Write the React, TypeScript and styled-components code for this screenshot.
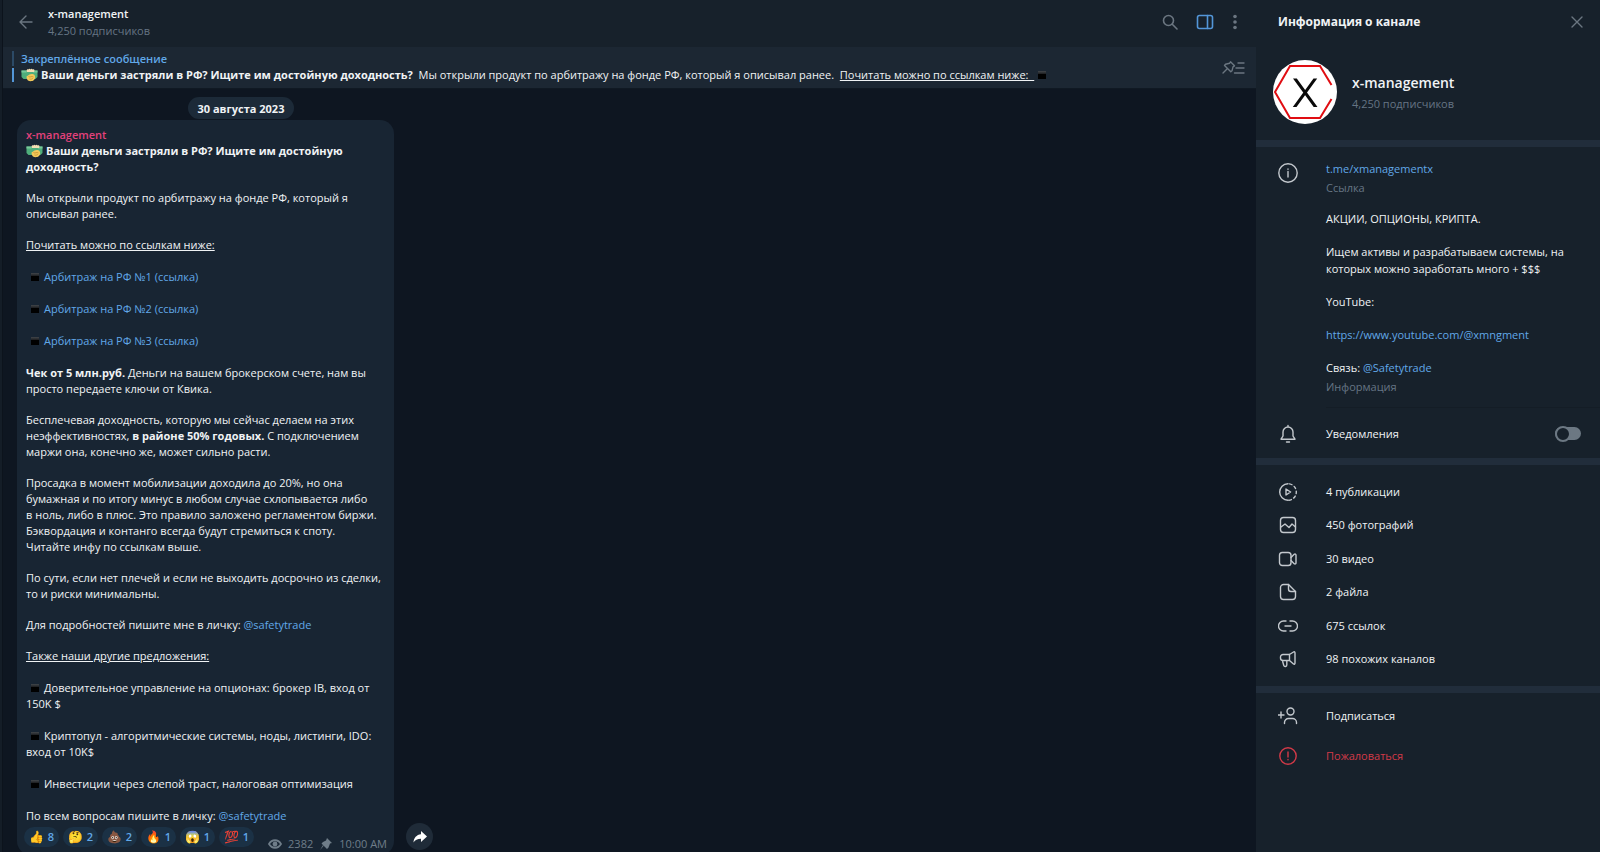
import React from 'react';
import styled, { createGlobalStyle, css } from 'styled-components';

const c = {
  bg: '#0e1621',
  bar: '#17212b',
  pinned: '#1c2733',
  bubble: '#182533',
  divider: '#212d3b',
  text: '#f0f3f5',
  muted: '#667584',
  link: '#61a8e8',
  rose: '#e2417b',
  red: '#d33a48',
  icon: '#c3c8cd',
};

const GlobalStyle = createGlobalStyle`
  * { box-sizing: border-box; }
  body {
    margin: 0;
    background: ${c.bg};
    color: ${c.text};
    font: 11px/16px "Open Sans", "Noto Sans", sans-serif;
  }
  h1, h2, p, ul { margin: 0; padding: 0; font-size: inherit; font-weight: inherit; }
  ul { list-style: none; }
  b { font-weight: 700; }
  button {
    margin: 0; padding: 0; border: 0; background: none;
    color: inherit; font: inherit; cursor: pointer;
  }
`;

const Shell = styled.div`
  display: flex;
  height: 100vh;
  overflow: hidden;
`;

const Rail = styled.div`
  flex: none;
  width: 3px;
  background: #141d27;
  border-right: 1px solid #0c131c;
`;

const Chat = styled.main`
  flex: 1;
  min-width: 0;
  display: flex;
  flex-direction: column;
`;

const ChatHeader = styled.header`
  flex: none;
  display: flex;
  align-items: center;
  height: 47px;
  padding: 0 18px 3px 16px;
  background: ${c.bar};
`;

const IconButton = styled.button<{ $active?: boolean }>`
  flex: none;
  display: grid;
  place-items: center;
  color: ${p => (p.$active ? '#5396d8' : '#6b7681')};
`;

const ChatTitle = styled.div`
  flex: 1;
  padding-left: 15px;
`;

const Name = styled.h1`
  line-height: 17px;
  font-weight: 600;
`;

const Muted = styled.p`
  line-height: 17px;
  color: ${c.muted};
`;

const HeaderActions = styled.div`
  display: flex;
  align-items: center;
  gap: 18px;
`;

const PinnedBar = styled.section`
  flex: none;
  display: flex;
  align-items: center;
  height: 42px;
  padding: 0 10px 0 9px;
  background: ${c.pinned};
  border-bottom: 1px solid #101923;
`;

const PinMarks = styled.div`
  align-self: stretch;
  display: grid;
  gap: 2px;
  width: 2px;
  margin: 4px 7px 6px 0;
`;

const PinMark = styled.span<{ $on?: boolean }>`
  background: ${p => (p.$on ? '#5396d8' : '#2c4a66')};
`;

const PinnedText = styled.div`
  flex: 1;
  min-width: 0;
  padding-bottom: 2px;
  white-space: pre;
  overflow: hidden;
`;

const PinnedTitle = styled.p`
  color: ${c.link};
  font-weight: 600;
`;

const Feed = styled.div`
  flex: 1;
  min-height: 0;
  overflow: hidden;
  padding: 8px 14px 0;
`;

const FeedColumn = styled.div`
  max-width: 448px;
`;

const DateChip = styled.div`
  width: max-content;
  margin: 0 auto 1px;
  padding: 1px 10px 0;
  border-radius: 11px;
  background: #1c2a38;
  font-weight: 700;
  line-height: 21px;
`;

const MessageRow = styled.div`
  display: flex;
  align-items: flex-end;
  gap: 12px;
`;

const Bubble = styled.article`
  width: 377px;
  padding: 7px 7px 0 9px;
  border-radius: 14px;
  background: ${c.bubble};
`;

const Author = styled.h2`
  color: ${c.rose};
  font-weight: 600;
`;

const Group = styled.div<{ $tight?: boolean }>`
  display: grid;
  gap: ${p => (p.$tight ? 15 : 16)}px;
  & + & { margin-top: 16px; }
`;

const Underlined = styled.span`
  text-decoration: underline;
`;

const Link = styled.a`
  color: ${c.link};
  text-decoration: none;
`;

const Marker = styled.span<{ $compact?: boolean }>`
  display: inline-block;
  width: 8px;
  height: 8px;
  margin: 0 5px;
  background: linear-gradient(#41464b, #1b1c1e 38%, #000 39%);
  ${p => p.$compact && css`margin: 0 4px;`}
`;

const InlineEmoji = styled.svg`
  width: 17px;
  height: 14px;
  margin-right: 3px;
  vertical-align: -3px;
`;

const BubbleFooter = styled.footer`
  display: flex;
  justify-content: space-between;
  margin: 3px 0 0 -2px;
  height: 28px;
`;

const Reactions = styled.div`
  display: flex;
  gap: 4px;
`;

const Reaction = styled.button`
  display: flex;
  align-items: center;
  justify-content: center;
  gap: 4px;
  width: 35px;
  height: 20px;
  border-radius: 10px;
  background: #1b3145;
  color: ${c.link};
  font-weight: 600;
`;

const Emoji = styled.span`
  font-size: 12px;
`;

const Meta = styled.div`
  display: flex;
  align-items: center;
  align-self: flex-end;
  gap: 6px;
  height: 22px;
  color: #6f7d89;
`;

const ShareButton = styled.button`
  display: grid;
  place-items: center;
  width: 27px;
  height: 27px;
  margin-bottom: 5px;
  border-radius: 50%;
  background: #1f2b38;
  color: #fff;
`;

const Panel = styled.aside`
  flex: none;
  width: 344px;
  background: ${c.bar};
`;

const PanelHeader = styled.header`
  display: flex;
  align-items: center;
  justify-content: space-between;
  height: 44px;
  padding: 0 16px 0 22px;
  font-size: 12px;
  font-weight: 700;
`;

const Profile = styled.section`
  display: flex;
  align-items: center;
  gap: 15px;
  height: 96px;
  padding: 0 17px;
`;

const ProfileName = styled.h2`
  margin: 2px 0 3px;
  font-size: 14px;
  line-height: 18px;
  font-weight: 600;
`;

const Section = styled.section`
  border-top: 7px solid ${c.divider};
`;

const InfoRow = styled.div`
  display: grid;
  grid-template-columns: 70px 1fr;
  padding: 13px 17px 0 0;
`;

const IconCell = styled.span`
  display: grid;
  justify-items: center;
  align-items: center;
  width: 64px;
  color: ${c.icon};
`;

const InfoIcon = styled(IconCell)`
  align-self: start;
  height: 26px;
`;

const InfoBody = styled.div`
  line-height: 17px;
  border-bottom: 1px solid #141d26;
  padding-bottom: 12px;
  margin-right: -17px;
`;

const InfoLabel = styled.p`
  margin-top: 2px;
  color: ${c.muted};
`;

const About = styled.div`
  display: grid;
  gap: 16px;
  margin-top: 14px;
`;

const NotifyRow = styled.label`
  display: grid;
  grid-template-columns: 70px 1fr auto;
  align-items: center;
  height: 50px;
  padding: 1px 19px 0 0;
  cursor: pointer;
`;

const Switch = styled.input`
  appearance: none;
  display: flex;
  align-items: center;
  width: 26px;
  height: 13px;
  margin: 0;
  border-radius: 7px;
  background: #6c7883;
  &::before {
    content: '';
    flex: none;
    box-sizing: border-box;
    width: 16px;
    height: 16px;
    border: 2px solid #6c7883;
    border-radius: 50%;
    background: ${c.bar};
  }
  &:checked::before { margin-left: 10px; }
`;

const MediaList = styled.ul`
  display: grid;
  grid-auto-rows: 1fr;
  height: 221px;
  padding: 10px 0;
`;

const RowButton = styled.button<{ $danger?: boolean }>`
  display: grid;
  grid-template-columns: 70px 1fr;
  align-items: center;
  width: 100%;
  height: 100%;
  text-align: left;
  ${p => p.$danger && css`
    color: ${c.red};
    ${IconCell} { color: ${c.red}; }
  `}
`;

const ActionList = styled.ul`
  display: grid;
  grid-auto-rows: 40px;
  padding-top: 3px;
`;

type IconProps = { w?: number; h?: number; sw?: number; children: React.ReactNode };
const Icon = ({ w = 20, h = 20, sw = 1.4, children }: IconProps) => (
  <svg width={w} height={h} viewBox={`0 0 ${w} ${h}`} fill="none" stroke="currentColor"
    strokeWidth={sw} strokeLinecap="round" strokeLinejoin="round" aria-hidden="true">
    {children}
  </svg>
);

const MoneyHands = () => (
  <InlineEmoji viewBox="0 0 34 28" aria-label="деньги">
    <path d="M1 5h32v13l-4 4H5l-4-4z" fill="#4fae7b" />
    <path d="M1 5h10v4H1zM24 5h9v4h-9z" fill="#79c99a" />
    <path d="M11 5c1-3 3-3 4-2 1-2 3-2 4 0 1-2 3-2 4 0 2-1 4 0 4 2l-1 3H12z" fill="#f5dfb4" />
    <path d="M11 17l6-4c4-2 8-1 10 1 2 3 2 7-1 10-3 3-9 3-12 1-2-2-3-5-3-8z" fill="#f3c95a" />
    <path d="M15 17c4 3 6-2 10 1M17 22c3 1 5 0 7-2" stroke="#c08a2a" strokeWidth="1.400" fill="none" />
  </InlineEmoji>
);

const media = [
  { label: '4 публикации', icon: (
    <Icon>
      <path d="M10 1.700a8.300 8.300 0 0 0 0 16.600" />
      <path d="M10 1.700a8.300 8.300 0 0 1 0 16.600" strokeDasharray="2.6 2.6" strokeDashoffset="-1.6" />
      <path d="M8 7v6l4.600-3z" />
    </Icon>) },
  { label: '450 фотографий', icon: (
    <Icon>
      <rect x="2.500" y="2.500" width="15" height="15" rx="3" />
      <path d="M3 12l4-3 4 3.500 3-3.500 3.500 3" />
    </Icon>) },
  { label: '30 видео', icon: (
    <Icon>
      <rect x="1.500" y="3.500" width="11.500" height="13" rx="2.800" />
      <path d="M13 8.500l3.200-3.200c.8-.6 1.800-.2 1.800.8v7.800c0 1-1 1.400-1.800.8L13 11.500" />
    </Icon>) },
  { label: '2 файла', icon: (
    <Icon>
      <path d="M10.500 2.500h-5a3 3 0 0 0-3 3v9a3 3 0 0 0 3 3h9a3 3 0 0 0 3-3v-5z" />
      <path d="M10.500 2.500v4.500a2.500 2.500 0 0 0 2.500 2.500h4.500" />
    </Icon>) },
  { label: '675 ссылок', icon: (
    <Icon>
      <path d="M8 5H5.500a5 5 0 0 0 0 10H8M12 5h2.500a5 5 0 0 1 0 10H12M7 10h6" />
    </Icon>) },
  { label: '98 похожих каналов', icon: (
    <Icon>
      <path d="M11.500 5.500H5A2.500 2.500 0 0 0 2.500 8v1A2.500 2.500 0 0 0 5 11.500h6.500zM11.500 5.500l4-2.500c.8-.5 1.500 0 1.500 1v10c0 1-.7 1.500-1.500 1l-4-3.500M4.500 12l1.300 4.500c.5 1.500 3 1.200 3-.5V12" />
    </Icon>) },
];

const links = [1, 2, 3];
const reactions: [string, number][] = [['👍', 8], ['🤔', 2], ['💩', 2], ['🔥', 1], ['😱', 1], ['💯', 1]];

export default function App() {
  return (
    <>
      <GlobalStyle />
      <Shell>
        <Rail />
        <Chat>
          <ChatHeader>
            <IconButton aria-label="Назад">
              <Icon w={14} h={14}><path d="M13 7H1M7 1L1 7l6 6" /></Icon>
            </IconButton>
            <ChatTitle>
              <Name>x-management</Name>
              <Muted>4,250 подписчиков</Muted>
            </ChatTitle>
            <HeaderActions>
              <IconButton aria-label="Поиск">
                <Icon w={16} h={16} sw={1.6}><circle cx="6.500" cy="6.500" r="5" /><path d="M10.300 10.300L15 15" /></Icon>
              </IconButton>
              <IconButton $active aria-label="Информация">
                <Icon w={18} h={16} sw={1.6}><rect x="1.500" y="1.500" width="15" height="13" rx="2" /><path d="M11.500 1.500v13" /></Icon>
              </IconButton>
              <IconButton aria-label="Меню">
                <svg width="6" height="16" fill="currentColor"><circle cx="3" cy="2.500" r="1.800" /><circle cx="3" cy="8" r="1.800" /><circle cx="3" cy="13.500" r="1.800" /></svg>
              </IconButton>
            </HeaderActions>
          </ChatHeader>

          <PinnedBar>
            <PinMarks><PinMark /><PinMark $on /></PinMarks>
            <PinnedText>
              <PinnedTitle>Закреплённое сообщение</PinnedTitle>
              <p>
                <MoneyHands /><b>Ваши деньги застряли в РФ? Ищите им достойную доходность? </b>
                {' Мы открыли продукт по арбитражу на фонде РФ, который я описывал ранее.  '}
                <Underlined>{'Почитать можно по ссылкам ниже:  '}</Underlined><Marker $compact />
              </p>
            </PinnedText>
            <IconButton aria-label="Закреплённые сообщения">
              <Icon w={24} h={16}>
                <path d="M8.500 1.800l4 4-1.500 1-1 4-1.200 1L2.500 5.500l1-1.200 4-1zM5.500 8.500L1 13" />
                <path d="M16 3h6M14 8h8M12.500 13h9.500" />
              </Icon>
            </IconButton>
          </PinnedBar>

          <Feed>
            <FeedColumn>
              <DateChip>30 августа 2023</DateChip>
              <MessageRow>
                <Bubble>
                  <Author>x-management</Author>
                  <Group $tight>
                    <p><MoneyHands /><b>Ваши деньги застряли в РФ? Ищите им достойную<br />доходность?</b></p>
                    <p>Мы открыли продукт по арбитражу на фонде РФ, который я<br />описывал ранее.</p>
                    <p><Underlined>Почитать можно по ссылкам ниже:</Underlined></p>
                  </Group>
                  <Group>
                    {links.map(n => (
                      <p key={n}><Marker /><Link href="#">Арбитраж на РФ №{n} (ссылка)</Link></p>
                    ))}
                  </Group>
                  <Group $tight>
                    <p><b>Чек от 5 млн.руб.</b> Деньги на вашем брокерском счете, нам вы<br />просто передаете ключи от Квика.</p>
                    <p>Бесплечевая доходность, которую мы сейчас делаем на этих<br />неэффективностях, <b>в районе 50% годовых.</b> С подключением<br />маржи она, конечно же, может сильно расти.</p>
                    <p>Просадка в момент мобилизации доходила до 20%, но она<br />бумажная и по итогу минус в любом случае схлопывается либо<br />в ноль, либо в плюс. Это правило заложено регламентом биржи.<br />Бэквордация и контанго всегда будут стремиться к споту.<br />Читайте инфу по ссылкам выше.</p>
                    <p>По сути, если нет плечей и если не выходить досрочно из сделки,<br />то и риски минимальны.</p>
                    <p>Для подробностей пишите мне в личку: <Link href="#">@safetytrade</Link></p>
                    <p><Underlined>Также наши другие предложения:</Underlined></p>
                  </Group>
                  <Group>
                    <p><Marker />Доверительное управление на опционах: брокер IB, вход от<br />150K $</p>
                    <p><Marker />Криптопул - алгоритмические системы, ноды, листинги, IDO:<br />вход от 10K$</p>
                    <p><Marker />Инвестиции через слепой траст, налоговая оптимизация</p>
                    <p>По всем вопросам пишите в личку: <Link href="#">@safetytrade</Link></p>
                  </Group>
                  <BubbleFooter>
                    <Reactions>
                      {reactions.map(([e, n]) => (
                        <Reaction key={e}><Emoji>{e}</Emoji>{n}</Reaction>
                      ))}
                    </Reactions>
                    <Meta>
                      <svg width="14" height="10" viewBox="0 0 14 10" fill="none" stroke="currentColor" strokeWidth="1.800"><path d="M1 5c3-5 9-5 12 0-3 5-9 5-12 0z" /><circle cx="7" cy="5" r="1.500" fill="currentColor" /></svg>
                      <span>2382</span>
                      <svg width="14" height="12" viewBox="0 0 14 12" fill="currentColor"><path d="M8 0l5 5-2 .5-1.500 4L8 11 2.500 5.500 4 4l3-1.500zM4.500 8L1 12l3-5z" /></svg>
                      <time>10:00 AM</time>
                    </Meta>
                  </BubbleFooter>
                </Bubble>
                <ShareButton aria-label="Переслать">
                  <svg width="14" height="12" viewBox="0 0 14 12" fill="currentColor"><path d="M8 0l6 5.500L8 11V7.800C4.500 7.800 2 9 .5 11.500.8 7 3.500 3.800 8 3.300z" /></svg>
                </ShareButton>
              </MessageRow>
            </FeedColumn>
          </Feed>
        </Chat>

        <Panel>
          <PanelHeader>
            <h2>Информация о канале</h2>
            <IconButton aria-label="Закрыть"><Icon w={14} h={14}><path d="M2 2l10 10M12 2L2 12" /></Icon></IconButton>
          </PanelHeader>
          <Profile>
            <svg width="64" height="64" viewBox="0 0 64 64" fill="none" aria-label="x-management">
              <circle cx="32" cy="32" r="32" fill="#fff" />
              <path d="M58.500 25L47 6H17L2 32l15 26h30l11.500-19" stroke="#e00d12" strokeWidth="2" />
              <path d="M20 18.500h3.800L44.500 47h-3.800zM40.500 18.500h3.700L23.500 47h-3.700z" fill="#0a0a0a" />
            </svg>
            <div>
              <ProfileName>x-management</ProfileName>
              <Muted>4,250 подписчиков</Muted>
            </div>
          </Profile>
          <Section>
            <InfoRow>
              <InfoIcon><Icon><circle cx="10" cy="10" r="9.200" /><path d="M10 8.500v5.500M10 6v.2" /></Icon></InfoIcon>
              <InfoBody>
                <Link href="#">t.me/xmanagementx</Link>
                <InfoLabel>Ссылка</InfoLabel>
                <About>
                  <p>АКЦИИ, ОПЦИОНЫ, КРИПТА.</p>
                  <p>Ищем активы и разрабатываем системы, на<br />которых можно заработать много + $$$</p>
                  <p>YouTube:</p>
                  <p><Link href="#">https://www.youtube.com/@xmngment</Link></p>
                  <p>Связь: <Link href="#">@Safetytrade</Link></p>
                </About>
                <InfoLabel>Информация</InfoLabel>
              </InfoBody>
            </InfoRow>
            <NotifyRow>
              <IconCell><Icon><path d="M10 1.500v1.500M10 3a5 5 0 0 0-5 5v4l-2 3.200h14L15 12V8a5 5 0 0 0-5-5zM8.500 18h3" /></Icon></IconCell>
              <span>Уведомления</span>
              <Switch type="checkbox" />
            </NotifyRow>
          </Section>
          <Section>
            <MediaList>
              {media.map(m => (
                <li key={m.label}><RowButton><IconCell>{m.icon}</IconCell>{m.label}</RowButton></li>
              ))}
            </MediaList>
          </Section>
          <Section>
            <ActionList>
              <li><RowButton>
                <IconCell><Icon><circle cx="12.500" cy="5.500" r="3.500" /><path d="M6.500 17.500v-1a4 4 0 0 1 4-4h4a4 4 0 0 1 4 4v1M0 9h6M3 6v6" /></Icon></IconCell>
                Подписаться
              </RowButton></li>
              <li><RowButton $danger>
                <IconCell><Icon><circle cx="10" cy="10" r="8.200" /><path d="M10 6v5M10 13.500v.3" /></Icon></IconCell>
                Пожаловаться
              </RowButton></li>
            </ActionList>
          </Section>
        </Panel>
      </Shell>
    </>
  );
}
